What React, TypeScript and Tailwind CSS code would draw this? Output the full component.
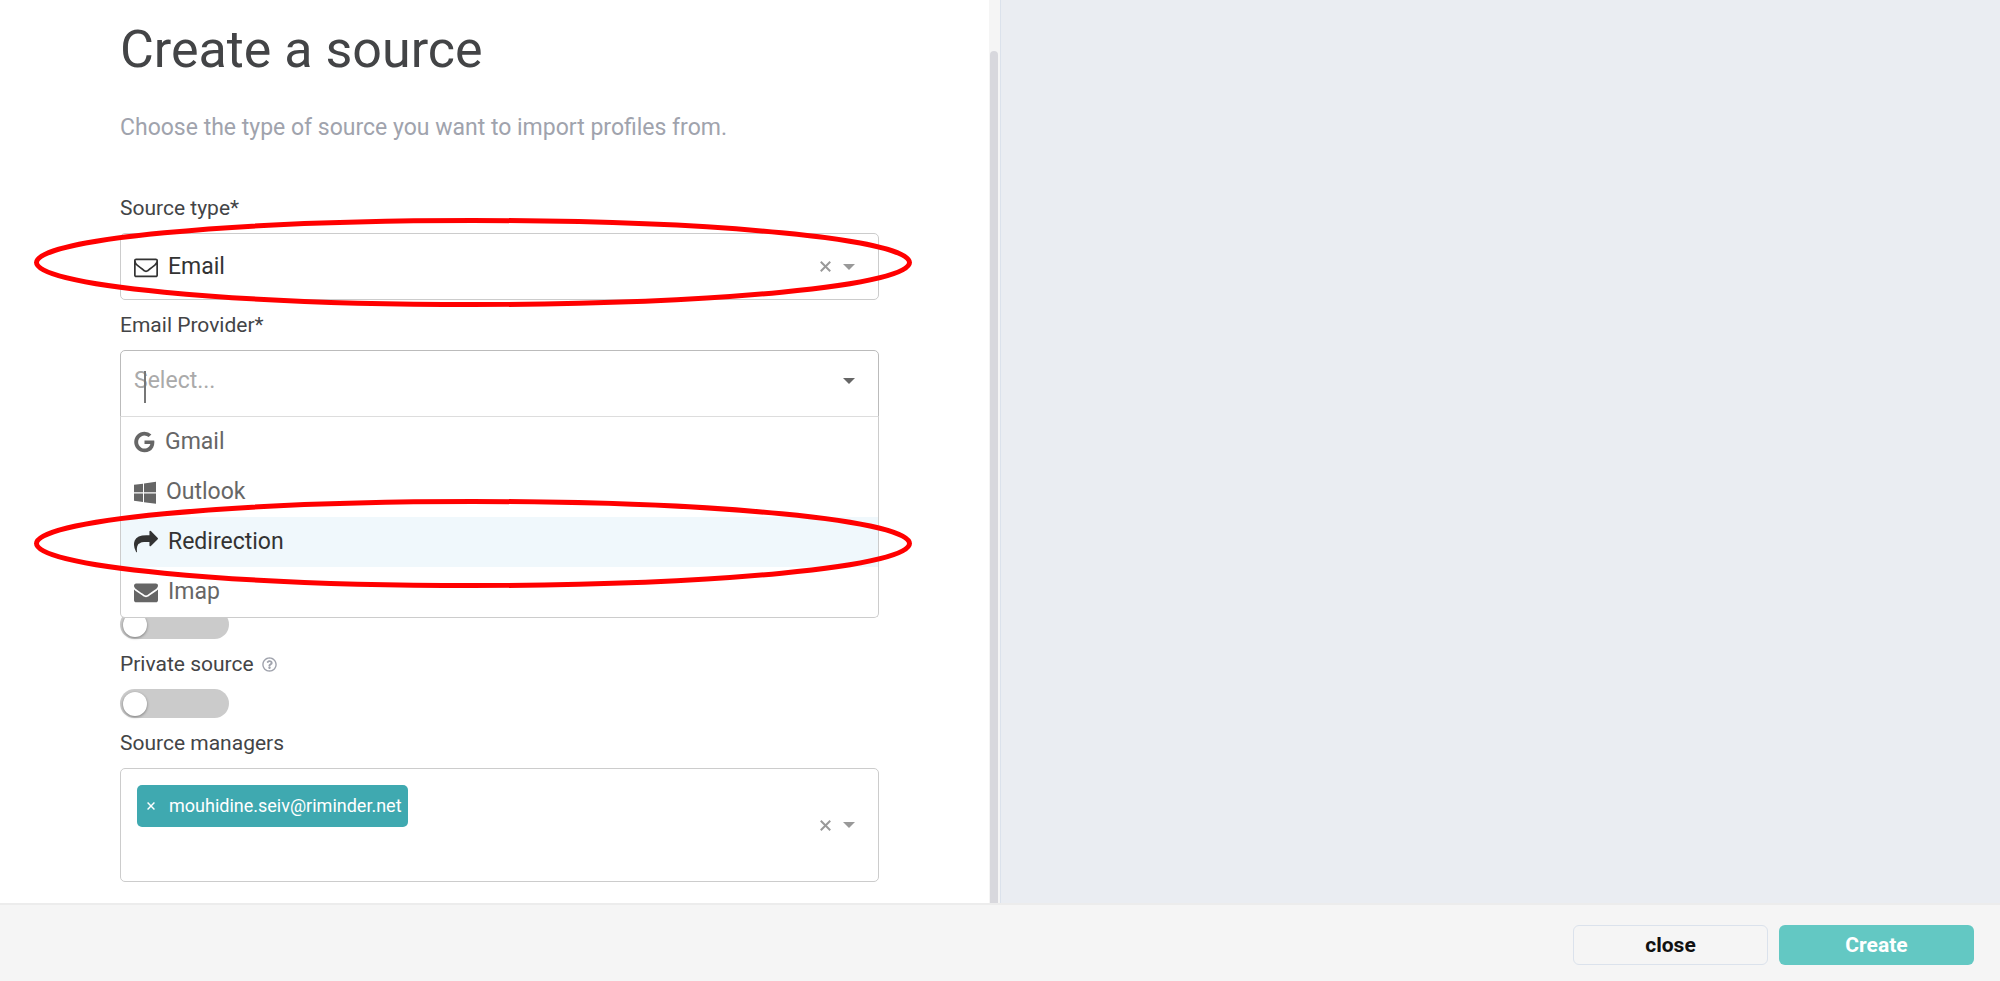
import type { ReactNode } from "react";
import { FaRegQuestionCircle } from "react-icons/fa";

const icons = {
  envelopeOutline: {
    viewBox: "0 0 1792 1792",
    size: "h-6 w-6",
    path: "M1664 1504v-768q-32 36-69 66-268 206-426 338-51 43-83 67t-86.500 48.500-102.500 24.500h-2q-48 0-102.500-24.500t-86.500-48.500-83-67q-158-132-426-338-37-30-69-66v768q0 13 9.500 22.500t22.500 9.500h1472q13 0 22.500-9.500t9.500-22.500zm0-1051v-24.500l-.5-13-3-12.500-5.500-9-9-7.500-14-2.500h-1472q-13 0-22.500 9.500t-9.500 22.500q0 168 147 284 193 152 401 317 6 5 35 29.500t46 37.500 44.500 31.500 50.500 27.500 43 9h2q20 0 43-9t50.500-27.500 44.500-31.500 46-37.500 35-29.500q208-165 401-317 54-43 100.500-115.500t46.500-131.500zm128-37v1088q0 66-47 113t-113 47h-1472q-66 0-113-47t-47-113v-1088q0-66 47-113t113-47h1472q66 0 113 47t47 113z",
  },
  google: {
    viewBox: "128 0 1536 1792",
    size: "h-6 w-[21px]",
    path: "M896 786h725q12 67 12 128 0 217-91 387.500t-259.500 266.500-386.500 96q-157 0-299-60.500t-245-163.500-163.500-245-60.500-299 60.500-299 163.500-245 245-163.500 299-60.500q300 0 515 201l-209 201q-123-119-306-119-129 0-238.500 65t-173.500 176.500-64 243.500 64 243.500 173.500 176.500 238.500 65q87 0 160-24t120-60 82-82 51.500-87 22.500-78h-436v-264z",
  },
  windows: {
    viewBox: "64 0 1664 1792",
    size: "h-6 w-[22px]",
    path: "M746 1006v651l-682-94v-557h682zm0-743v659h-682v-565zm982 743v786l-907-125v-661h907zm0-878v794h-907v-669z",
  },
  share: {
    viewBox: "0 0 1792 1792",
    size: "h-6 w-6",
    path: "M1792 640q0 26-19 45l-512 512q-19 19-45 19t-45-19-19-45v-256h-224q-98 0-175.500 6t-154 21.500-133 42.500-105.500 69.500-80 101-48.500 138.500-17.500 181q0 55 5 123 0 6 2.500 23.500t2.500 26.500q0 15-8.500 25t-23.500 10q-16 0-28-17-7-9-13-22t-13.500-30-10.500-24q-127-285-127-451 0-199 53-333 162-403 875-403h224v-256q0-26 19-45t45-19 45 19l512 512q19 19 19 45z",
  },
  envelope: {
    viewBox: "0 0 1792 1792",
    size: "h-6 w-6",
    path: "M1792 710v794q0 66-47 113t-113 47h-1472q-66 0-113-47t-47-113v-794q44 49 101 87 362 246 497 345 57 42 92.500 65.500t94.500 48 110 24.500h2q51 0 110-24.500t94.500-48 92.500-65.500q170-123 498-345 57-39 100-87zm0-294q0 79-49 151t-122 123q-376 261-468 325-10 7-42.500 31t-54 38.500-52 32.500-57.500 27-50 9h-2q-23 0-50-9t-57.500-27-52-32.500-54-38.500-42.500-31q-91-64-262-182.500t-205-142.500q-62-42-117-115.500t-55-136.500q0-78 41.500-130t118.500-52h1472q65 0 112.500 47t47.500 113z",
  },
};

type IconName = keyof typeof icons;

const providers: { name: string; icon: IconName }[] = [
  { name: "Gmail", icon: "google" },
  { name: "Outlook", icon: "windows" },
  { name: "Redirection", icon: "share" },
  { name: "Imap", icon: "envelope" },
];

function Icon({ name }: { name: IconName }) {
  const { viewBox, size, path } = icons[name];
  return (
    <svg aria-hidden="true" className={`${size} shrink-0 fill-current`} viewBox={viewBox}>
      <path d={path} />
    </svg>
  );
}

function Arrow({ className }: { className: string }) {
  return (
    <svg aria-hidden="true" className={`h-[6px] w-3 shrink-0 fill-current ${className}`} viewBox="0 0 12 6">
      <path d="M0 0h12L6 6z" />
    </svg>
  );
}

function Cross({ className }: { className: string }) {
  return (
    <svg aria-hidden="true" className={className} viewBox="0 0 10 10">
      <path d="M.7.7l8.600 8.600M9.300.7L.7 9.300" fill="none" stroke="currentColor" strokeWidth="1.8" />
    </svg>
  );
}

function Clear({ label }: { label: string }) {
  return (
    <button type="button" aria-label={label} className="shrink-0 text-[#999]">
      <Cross className="size-[11px]" />
    </button>
  );
}

function Highlight({ className }: { className: string }) {
  return (
    <svg
      aria-hidden="true"
      className={`pointer-events-none absolute z-20 overflow-visible ${className}`}
      viewBox="0 0 878 89"
      preserveAspectRatio="none"
    >
      <ellipse cx="439" cy="44.5" rx="436.5" ry="42" fill="none" stroke="#ff0000" strokeWidth="5" vectorEffect="non-scaling-stroke" />
    </svg>
  );
}

function Label({ htmlFor, children }: { htmlFor: string; children: ReactNode }) {
  return (
    <label htmlFor={htmlFor} className="text-[21px] leading-[50px] text-[#434446]">{children}</label>
  );
}

function Toggle({ id, label }: { id: string; label?: string }) {
  return (
    <input
      id={id}
      type="checkbox"
      role="switch"
      aria-label={label}
      className="block h-[29px] w-[109px] appearance-none rounded-full bg-[#cbcbcb] p-[3px] before:block before:size-6 before:rounded-full before:bg-white before:shadow-[0_1px_3px_rgba(0,0,0,0.4)]"
    />
  );
}

export default function App() {
  return (
    <div className="flex h-screen flex-col overflow-hidden bg-white font-['Roboto',sans-serif]">
      <main className="grid min-h-0 flex-1 grid-cols-2">
        <section className="flex min-h-0 bg-white">
          <form className="min-w-0 flex-1 pt-5 pr-[110px] pl-[120px]">
            <h1 className="text-[52px] leading-[60px] text-[#434446]">Create a source</h1>
            <p className="mt-8 text-[23px] leading-8 text-[#a0a3ad]">Choose the type of source you want to import profiles from.</p>

            <div className="mt-[39px] flex flex-col">
              <Label htmlFor="source-type">Source type*</Label>
              <div className="relative flex h-[67px] items-center rounded-[5px] border border-[#ccc] pr-[23px] pl-[13px] text-[#333]">
                <Icon name="envelopeOutline" />
                <select id="source-type" className="min-w-0 flex-1 appearance-none pl-[10px] text-[23px] leading-8 outline-none">
                  <option>Email</option>
                </select>
                <Clear label="Clear source type" />
                <Arrow className="ml-3 text-[#999]" />
                <Highlight className="-top-4 -left-[87px] h-[89px] w-[calc(100%+121px)]" />
              </div>
            </div>

            <div className="mb-[193px] flex flex-col">
              <Label htmlFor="provider">Email Provider*</Label>
              <div className="relative flex h-[67px] items-center rounded-t-[5px] border border-[#bbb] pr-[23px] pb-[6px] pl-[13px]">
                <input
                  id="provider"
                  role="combobox"
                  aria-expanded="true"
                  aria-controls="provider-list"
                  placeholder="Select..."
                  className="min-w-0 flex-1 text-[23px] leading-8 outline-none placeholder:text-[#aaa]"
                />
                <span aria-hidden="true" className="absolute top-5 left-[23px] h-8 w-[2px] bg-[#777]" />
                <Arrow className="text-[#666]" />
                <ul
                  id="provider-list"
                  role="listbox"
                  className="absolute top-full -right-px -left-px z-10 rounded-b-[5px] border border-[#ccc] border-t-[#ddd] bg-white"
                >
                  {providers.map(({ name, icon }) => (
                    <li
                      key={name}
                      role="option"
                      aria-selected={name === "Redirection"}
                      className="relative flex h-[50px] items-center gap-[10px] pl-[13px] text-[23px] leading-8 text-[#666] aria-selected:bg-[#f0f8fc] aria-selected:text-[#333]"
                    >
                      <Icon name={icon} />
                      {name}
                      {name === "Redirection" && <Highlight className="-top-[18px] -left-[87px] h-[89px] w-[calc(100%+121px)]" />}
                    </li>
                  ))}
                </ul>
              </div>
            </div>

            <Toggle id="active" label="Active source" />
            <div className="flex items-center gap-2">
              <Label htmlFor="private">Private source</Label>
              <FaRegQuestionCircle aria-hidden="true" className="size-[15px] text-[#a0a3ad]" />
            </div>
            <Toggle id="private" />

            <div className="flex flex-col">
              <Label htmlFor="managers">Source managers</Label>
              <div className="flex h-[114px] items-center rounded-[5px] border border-[#ccc] pr-[23px] pl-4">
                <div className="flex min-w-0 flex-1 self-start pt-4">
                  <span className="flex h-[42px] items-center gap-[14px] rounded-[5px] bg-[#3fa9b0] pr-[6px] pl-[10px] text-[18px] leading-6 text-white">
                    <button type="button" aria-label="Remove manager">
                      <Cross className="size-2" />
                    </button>
                    mouhidine.seiv@riminder.net
                  </span>
                  <input id="managers" className="min-w-0 flex-1 text-[18px] outline-none" />
                </div>
                <Clear label="Clear managers" />
                <Arrow className="ml-3 text-[#999]" />
              </div>
            </div>
          </form>
          <div className="flex w-[11px] bg-[#f5f5f5] pt-[51px] pr-[2px] pl-px">
            <div className="flex-1 rounded-t-sm bg-[#d8d8dd]" />
          </div>
        </section>
        <aside className="border-l border-[#dbe2ec] bg-[#eaedf2]" />
      </main>
      <footer className="flex justify-end gap-[11px] border-t-2 border-[#ececec] bg-[#f5f5f5] pt-5 pr-[26px] pb-4 text-[21px] leading-6 font-bold">
        <button type="button" className="h-10 w-[195px] rounded-md border border-[#dbe2ec] text-[#111]">close</button>
        <button type="submit" className="h-10 w-[195px] rounded-md bg-[#63c8c3] text-white">Create</button>
      </footer>
    </div>
  );
}
